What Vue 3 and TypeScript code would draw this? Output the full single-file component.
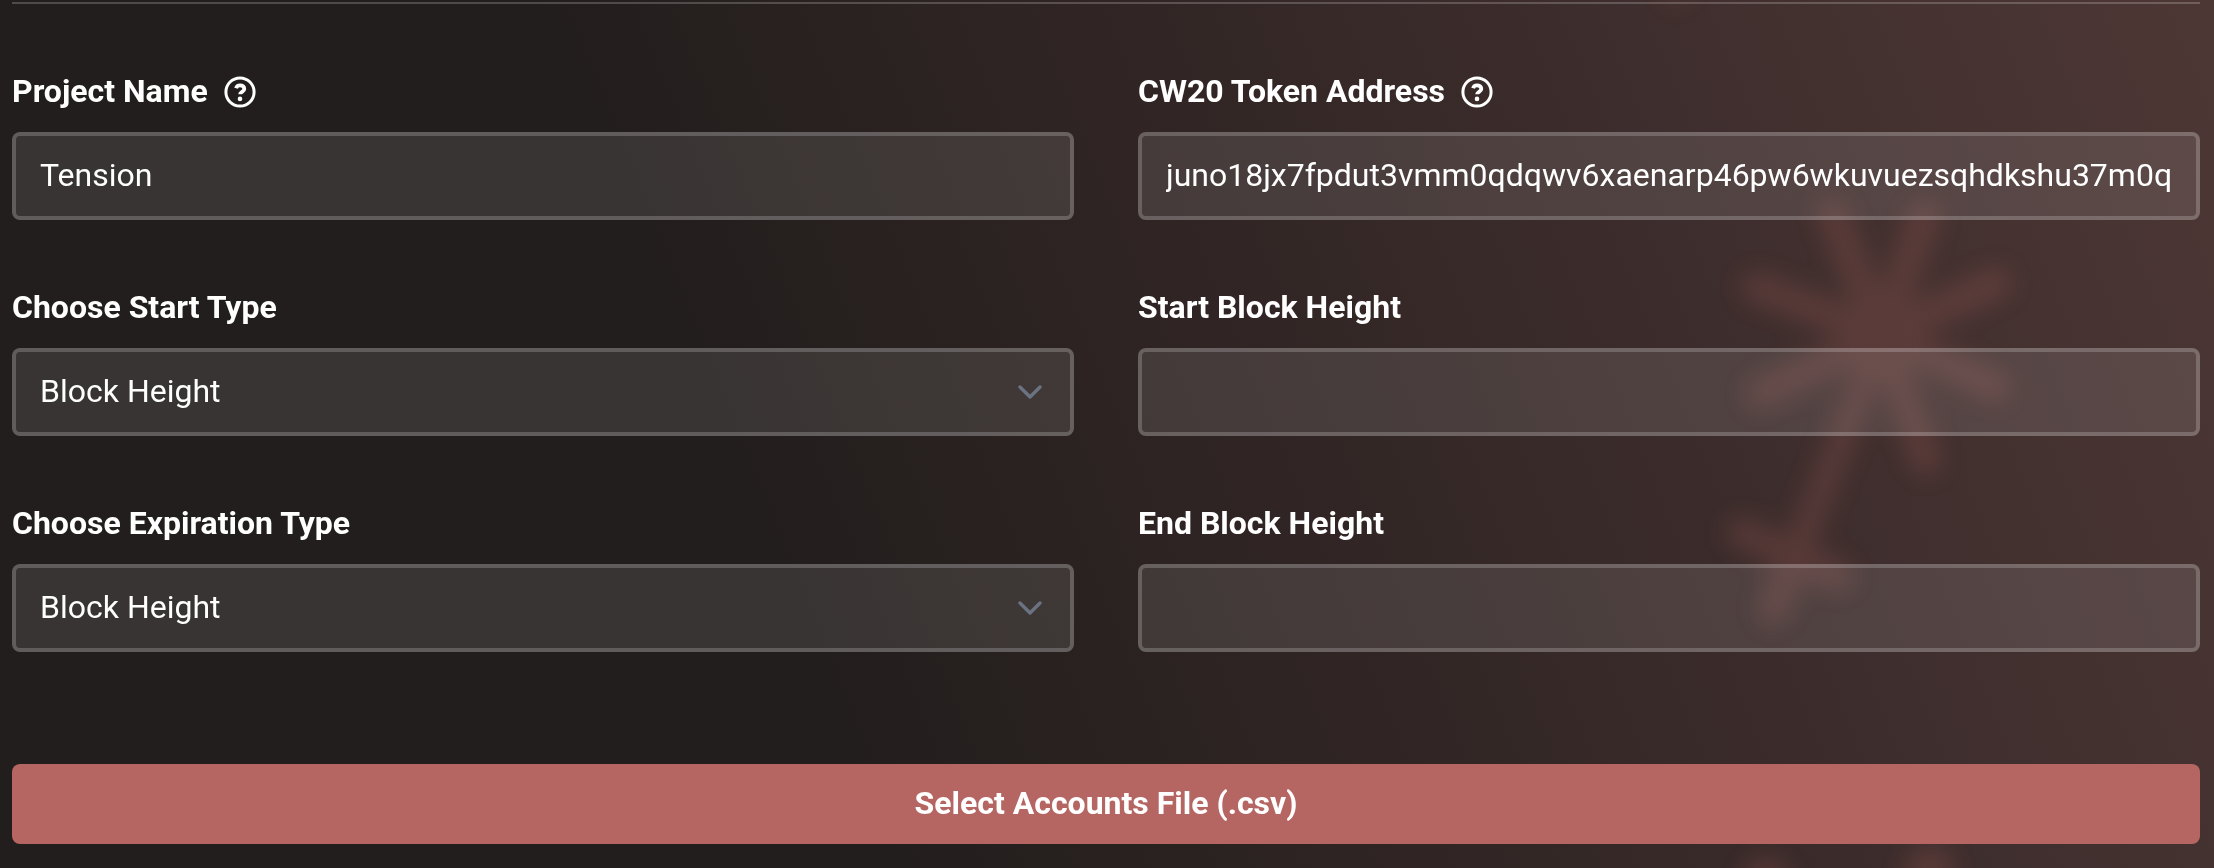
<script setup lang="ts">
import { ref } from 'vue'

interface Field {
  id: string
  label: string
  value: string
  help?: boolean
  select?: boolean
}

const fields = ref<Field[]>([
  { id: 'project', label: 'Project Name', value: 'Tension', help: true },
  {
    id: 'token',
    label: 'CW20 Token Address',
    value: 'juno18jx7fpdut3vmm0qdqwv6xaenarp46pw6wkuvuezsqhdkshu37m0q',
    help: true,
  },
  { id: 'start-type', label: 'Choose Start Type', value: 'Block Height', select: true },
  { id: 'start', label: 'Start Block Height', value: '' },
  { id: 'end-type', label: 'Choose Expiration Type', value: 'Block Height', select: true },
  { id: 'end', label: 'End Block Height', value: '' },
])
</script>

<template>
  <main class="page">
    <svg class="backdrop" viewBox="0 0 2214 868" aria-hidden="true">
      <defs>
        <filter id="soft" filterUnits="userSpaceOnUse" x="1500" y="-100" width="714" height="1100">
          <feGaussianBlur stdDeviation="12" />
        </filter>
      </defs>
      <g class="palm" filter="url(#soft)">
        <path d="M1882 335 1832 213M1882 335 1925 215M1882 335 1756 287M1882 335 1996 283M1882 335 1760 394M1882 335 1996 387M1882 335 1926 460" />
        <path class="trunk" d="M1878 345 1800 545" />
        <path d="M1742 533 1838 576M1795 555 1773 610" />
        <circle cx="1882" cy="330" r="42" />
        <path class="lower" d="M1766 880 1790 950M1930 868 1910 950" />
        <circle class="faint" cx="1676" cy="-10" r="18" />
      </g>
    </svg>

    <form class="form" @submit.prevent>
      <hr class="rule" />
      <div class="grid">
        <div v-for="f in fields" :key="f.id" class="field">
          <div class="caption">
            <label :for="f.id">{{ f.label }}</label>
            <svg v-if="f.help" class="help" viewBox="0 0 32 32" aria-hidden="true">
              <circle cx="16" cy="16" r="14.1" />
              <path class="hook" d="M12.1 12.2C12.6 10.2 14.1 9.3 16.1 9.3c2.4 0 4.2 1.4 4.2 3.6 0 2.9-4.2 3-4.2 5.4" />
              <circle class="dot" cx="16" cy="22.9" r="2.3" />
            </svg>
          </div>
          <div class="control">
            <template v-if="f.select">
              <button :id="f.id" type="button" class="input select">{{ f.value }}</button>
              <svg class="chevron" viewBox="0 0 24 14" aria-hidden="true">
                <path d="M2 2 12 12 22 2" />
              </svg>
            </template>
            <input v-else :id="f.id" v-model="f.value" class="input" type="text" spellcheck="false" />
          </div>
        </div>
      </div>
      <button type="button" class="upload">Select Accounts File (.csv)</button>
    </form>
  </main>
</template>

<style>
body {
  margin: 0;
  background: #231f1e;
}
</style>

<style scoped>
.page {
  position: relative;
  box-sizing: border-box;
  height: 868px;
  overflow: hidden;
  padding: 2px 14px 24px 12px;
  color: #fff;
  font: 400 32px/48px Roboto, sans-serif;
  background: linear-gradient(68deg, #221e1d 0%, #221e1d 35%, #302524 56%, #3e2e2d 77%, #4d3735 100%);
}
.backdrop {
  position: absolute;
  inset: 0;
  width: 100%;
  height: 100%;
}
.palm {
  opacity: 0.22;
  fill: #b66662;
  stroke: none;
}
.palm path {
  fill: none;
  stroke: #b66662;
  stroke-width: 32;
  stroke-linecap: round;
}
.palm .trunk {
  stroke-width: 28;
}
.palm .lower {
  stroke-width: 48;
}
.palm .faint {
  opacity: 0.4;
}
.form {
  position: relative;
}
.rule {
  height: 2px;
  margin: 0 0 64px;
  border: 0;
  background: rgba(255, 255, 255, 0.2);
}
.grid {
  display: grid;
  grid-template-columns: 1fr 1fr;
  gap: 64px;
}
.caption {
  display: flex;
  align-items: center;
  height: 48px;
  margin-bottom: 16px;
  gap: 16px;
  font-weight: 700;
}
.caption label {
  padding-bottom: 2px;
}
.help {
  width: 32px;
  height: 32px;
  fill: none;
  stroke: #fff;
  stroke-width: 3;
}
.help .hook {
  stroke-width: 3.8;
}
.help .dot {
  fill: #fff;
  stroke: none;
}
.control {
  position: relative;
  height: 88px;
}
.input {
  display: block;
  box-sizing: border-box;
  width: 100%;
  height: 88px;
  margin: 0;
  padding: 0 24px 2px;
  border: 4px solid rgba(255, 255, 255, 0.2);
  border-radius: 8px;
  outline: none;
  background: rgba(255, 255, 255, 0.1);
  color: #fff;
  font: inherit;
  text-align: left;
}
.chevron {
  position: absolute;
  top: 37px;
  right: 32px;
  width: 24px;
  height: 14px;
  overflow: visible;
  fill: none;
  stroke: #6b7280;
  stroke-width: 3.4;
  stroke-linecap: round;
  stroke-linejoin: round;
}
.upload {
  display: block;
  width: 100%;
  height: 80px;
  margin: 112px 0 0;
  padding: 0 0 2px;
  border: 0;
  border-radius: 8px;
  background: #b66662;
  color: #fff;
  font: 700 32px/48px Roboto, sans-serif;
}
</style>
